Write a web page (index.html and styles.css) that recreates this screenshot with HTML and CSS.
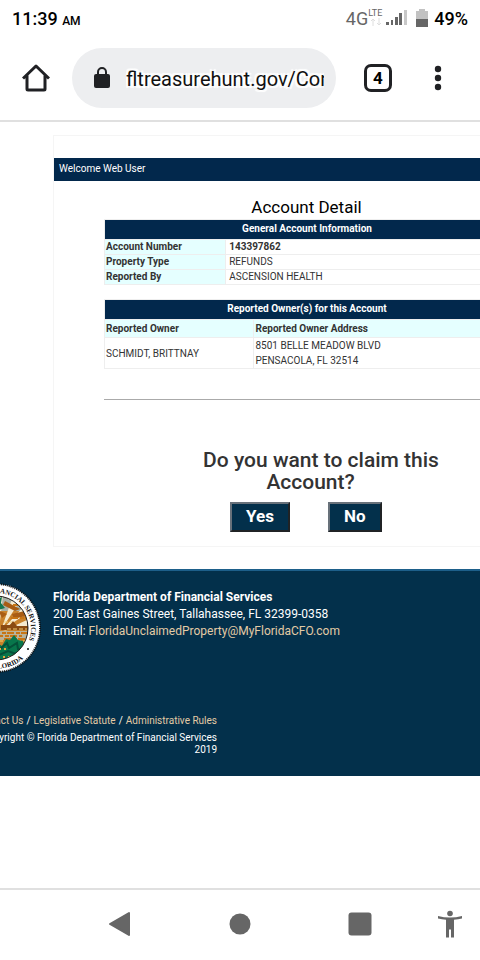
FILE: index.html
```html
<!DOCTYPE html>
<html lang="en">
<head>
<meta charset="utf-8">
<meta name="viewport" content="width=device-width, initial-scale=1">
<title>Account Detail</title>
<link rel="stylesheet" href="styles.css">
</head>
<body>
<header class="browser">
  <div class="status">
    <div class="clock">11:39 <small>AM</small></div>
    <div class="signals">
      <span class="network">4G</span>
      <span class="lte">LTE
        <svg width="12" height="8" viewBox="0 0 12 8" fill="none" stroke="#dedede" aria-hidden="true"><path d="M3 8V1M1 3l2-2 2 2M9 0v7M7 5l2 2 2-2"/></svg>
      </span>
      <svg class="bars" width="21" height="16" viewBox="0 0 21 16" aria-hidden="true"><g fill="#666"><rect y="12" width="3" height="3"/><rect x="5" y="10" width="2" height="5"/><rect x="9" y="7" width="3" height="8"/><rect x="13" y="3" width="3" height="12"/></g><rect x="18" width="3" height="15" fill="#c8c8c8"/></svg>
      <svg class="battery" width="12" height="19" viewBox="0 0 12 19" aria-hidden="true"><path d="M0 2h3V0h6v2h3v9H0z" fill="#c2c2c2"/><path d="M0 10h12v8H0z" fill="#666"/></svg>
      <span class="percent">49%</span>
    </div>
  </div>
  <div class="toolbar">
    <button class="icon home" aria-label="Home"><svg width="28" height="28" viewBox="0 0 28 28" fill="none" stroke="#202124" stroke-width="3" stroke-linejoin="round"><path d="M1 14.500 14 2l13 12.500M5 11.500V25q0 1 1 1h16q1 0 1-1V11.500"/></svg></button>
    <div class="address">
      <svg width="16" height="22" viewBox="0 0 16 22" aria-hidden="true"><path d="M4 8V5a4 4 0 0 1 8 0v3" fill="none" stroke="#202124" stroke-width="2"/><rect y="7" width="16" height="14" rx="2" fill="#202124"/></svg>
      <input type="text" aria-label="Web address" value="fltreasurehunt.gov/Con">
    </div>
    <button class="tabs" aria-label="4 open tabs">4</button>
    <button class="icon more" aria-label="More options"><svg width="8" height="26" viewBox="0 0 8 26" fill="#202124"><circle cx="4" cy="4" r="3.200"/><circle cx="4" cy="13" r="3.200"/><circle cx="4" cy="22" r="3.200"/></svg></button>
  </div>
</header>

<main class="page">
  <section class="panel">
    <div class="welcome">Welcome Web User</div>
    <div class="detail">
      <h1>Account Detail</h1>
      <table class="general">
        <colgroup><col class="label"><col></colgroup>
        <thead><tr><th colspan="2">General Account Information</th></tr></thead>
        <tbody>
          <tr><th scope="row">Account Number</th><td><b>143397862</b></td></tr>
          <tr><th scope="row">Property Type</th><td>REFUNDS</td></tr>
          <tr><th scope="row">Reported By</th><td>ASCENSION HEALTH</td></tr>
        </tbody>
      </table>
      <table class="owners">
        <colgroup><col class="owner"><col></colgroup>
        <thead>
          <tr><th colspan="2">Reported Owner(s) for this Account</th></tr>
          <tr class="columns"><th scope="col">Reported Owner</th><th scope="col">Reported Owner Address</th></tr>
        </thead>
        <tbody><tr><td>SCHMIDT, BRITTNAY</td><td>8501 BELLE MEADOW BLVD<br>PENSACOLA, FL 32514</td></tr></tbody>
      </table>
      <hr>
    </div>
    <div class="claim">
      <h2>Do you want to claim this Account?&nbsp;&nbsp;&nbsp;&nbsp;</h2>
      <div class="choices"><button>Yes</button><button>No</button></div>
    </div>
  </section>

  <footer class="footer">
    <div class="agency">
      <svg class="seal" width="90" height="90" viewBox="0 0 90 90" role="img" aria-label="Department of Financial Services seal">
        <defs>
          <path id="ring" d="M45 80A35 35 0 1 1 45.100 80"/>
          <path id="ring-low" d="M4 45A41 41 0 0 0 86 45"/>
          <clipPath id="scene"><circle cx="45" cy="45" r="32"/></clipPath>
        </defs>
        <circle cx="45" cy="45" r="44" fill="#fff" stroke="#111" stroke-width="2" stroke-dasharray="1 1"/>
        <g clip-path="url(#scene)">
          <path d="M10 10h70v70H10z" fill="#c9822b"/>
          <path d="M10 10h70v18H10z" fill="#a7afa5"/>
          <path d="M48 47 44 12l8 0zM50 47l12-34 7 5zM51 47l24-26 3 8zM52 48l28-13v7z" fill="#f5ead0"/>
          <path d="M54 18l15 8-5 2-12-6zM61 31l17-4v5l-15 4zM47 27l9 4-5 4z" fill="#a85c14"/>
          <path d="M50 42h9l3-4 4 5h12v4H50z" fill="#8b4b12"/>
          <path d="M40 48h40v9H40z" fill="#b9b39a"/>
          <path d="M42 50h36M45 53h26M53 56h26M62 22h12M60 35h18" stroke="#c87514" stroke-width="2" stroke-dasharray="7 2 4 1"/>
          <path d="M53 39h8M56 46h20M48 58h27" stroke="#f2cf70" stroke-dasharray="4 2"/>
          <path d="M38 62l8-2 5 3 4-7 4 1 4-5 4 5 5 1 2 6 6 1v17H38z" fill="#08764b"/>
          <path d="M49 66l7-6 2 5 8-5 1 6 8 1M48 72l9-4 8 3 10-2" fill="none" stroke="#045038" stroke-width="2"/>
          <path d="M43 66h13M52 74h17" stroke="#e1a840" stroke-width="2" stroke-dasharray="2 3"/>
          <path d="M45 16l6-2-1 6 4 5-7 2z" fill="#14764f"/>
        </g>
        <circle cx="45" cy="45" r="32" fill="none" stroke="#222"/>
        <text class="seal-text"><textPath href="#ring" startOffset="177">DEPARTMENT OF FINANCIAL SERVICES</textPath></text>
        <text class="seal-text"><textPath href="#ring-low" startOffset="94">OF FLORIDA</textPath></text>
        <circle cx="77" cy="66" r="1" fill="#111"/>
      </svg>
      <address>
        <strong>Florida Department of Financial Services</strong><br>
        200 East Gaines Street, Tallahassee, FL 32399-0358<br>
        Email: <a href="mailto:FloridaUnclaimedProperty@MyFloridaCFO.com">FloridaUnclaimedProperty@MyFloridaCFO.com</a>
      </address>
    </div>
    <div class="legal">
      <nav><a href="#">Contact Us</a> / <a href="#">Legislative Statute</a> / <a href="#">Administrative Rules</a></nav>
      <p>Copyright © Florida Department of Financial Services 2019</p>
    </div>
  </footer>
</main>

<nav class="system" aria-label="System navigation">
  <span></span>
  <button class="icon" aria-label="Back"><svg width="24" height="26" viewBox="0 0 24 26"><path d="M2 13 21 2v22z" fill="#666" stroke="#666" stroke-width="2" stroke-linejoin="round"/></svg></button>
  <button class="icon" aria-label="Home screen"><svg width="22" height="22" viewBox="0 0 22 22"><circle cx="11" cy="11" r="10.500" fill="#666"/></svg></button>
  <button class="icon" aria-label="Recent apps"><svg width="24" height="24" viewBox="0 0 24 24"><rect x=".5" y=".5" width="23" height="23" rx="3" fill="#666"/></svg></button>
  <button class="icon" aria-label="Accessibility"><svg width="24" height="28" viewBox="0 0 24 28" fill="#666"><circle cx="12" cy="3.500" r="2.800"/><path d="M0 6q12 3 24 0v2.500q-4 1-8 1.300V27.500h-3v-8h-2v8H8V9.800Q4 9.500 0 8.500z"/></svg></button>
</nav>
</body>
</html>
```
FILE: styles.css
```css
* { box-sizing: border-box; }
body {
  margin: 0;
  min-height: 100vh;
  display: flex;
  flex-direction: column;
  overflow-x: hidden;
  background: #fff;
  color: #333;
  font-family: Roboto, "Liberation Sans", sans-serif;
}
button { font-family: inherit; }
.icon { display: grid; place-items: center; padding: 0; border: 0; background: none; }
svg { display: block; flex: none; }

.browser { border-bottom: 2px solid #e0e0e0; }
.status {
  height: 36px;
  padding: 0 12px;
  display: flex;
  align-items: center;
  justify-content: space-between;
  color: #000;
  font-size: 18px;
  font-weight: 500;
}
.clock small { font-size: 12px; }
.signals { display: flex; align-items: center; }
.network { color: #666; font-weight: 400; }
.lte { height: 20px; margin-right: 4px; color: #666; font-size: 9px; font-weight: 400; line-height: 10px; }
.lte svg { margin-left: 2px; }
.battery { margin: 0 6px 0 9px; }
.toolbar {
  height: 84px;
  padding: 0 38px 0 22px;
  display: flex;
  align-items: center;
}
.address {
  flex: 1;
  min-width: 0;
  height: 60px;
  margin: 0 28px 0 22px;
  padding: 0 12px 0 22px;
  display: flex;
  align-items: center;
  gap: 16px;
  border-radius: 30px;
  background: #edeef0;
}
.address input {
  flex: 1;
  min-width: 0;
  padding: 2px 0 0;
  border: 0;
  background: none;
  color: #111;
  font: 20px/30px Roboto, sans-serif;
  text-shadow: 0 0 3px #fff, 2px 2px 1px #fff, -2px -2px 1px #fff, 2px -2px 1px #fff, -2px 2px 1px #fff;
}
.tabs {
  width: 28px;
  height: 28px;
  padding: 0;
  border: 3px solid #202124;
  border-radius: 7px;
  background: #fff;
  color: #000;
  font-size: 17px;
  font-weight: 700;
  line-height: 20px;
}
.more { margin-left: 42px; }

.page { flex: 1; padding-top: 13px; overflow: hidden; }
.panel {
  margin: 0 -80px 0 53px;
  padding: 22px 0 14px;
  border: 1px solid #f5f5f5;
}
.welcome {
  padding: 0 5px;
  background: #02284c;
  color: #fff;
  font-size: 10px;
  line-height: 22px;
  padding-bottom: 1px;
}
.detail { margin: 0 50px; }
h1 {
  margin: 16px 0 2px;
  color: #000;
  font-size: 17px;
  font-weight: 400;
  line-height: 20px;
  text-align: center;
}
table {
  width: 100%;
  border-collapse: collapse;
  table-layout: fixed;
  font-size: 10px;
  line-height: 14px;
}
.label { width: 30%; }
.owner { width: 37%; }
th, td { padding: 0 0 0 1px; border: 1px solid #eee; text-align: left; }
thead th { height: 20px; padding-bottom: 2px; background: #02284c; color: #fff; text-align: center; }
tbody th, .columns th { background: #e5ffff; color: #333; text-align: left; }
.columns th { height: 18px; padding-bottom: 0; }
.general td { padding-left: 3px; }
.owners { margin-top: 14px; }
.owners td { line-height: 15px; }
.owners tbody td { padding-bottom: 0; }
hr { margin: 30px 0 0; border: 0; border-top: 1px solid #aaa; }
.claim { width: 250px; margin: 49px 0 0 142px; }
h2 {
  margin: 0 0 9px;
  font-size: 21px;
  font-weight: 500;
  line-height: 22px;
  text-align: center;
}
.choices { display: flex; gap: 38px; margin-left: 34px; }
.choices button {
  height: 30px;
  padding: 0 14px 2px;
  border: 2px outset #68717a;
  border-radius: 0;
  background: #03304b;
  color: #fff;
  font-size: 17px;
  font-weight: 700;
}

.footer {
  margin-top: 22px;
  padding-bottom: 20px;
  border-top: 2px solid #1d5f8a;
  background: #03304b;
  color: #fff;
}
.footer a { color: #e3cba5; text-decoration: none; }
.agency { display: flex; gap: 12px; padding-top: 12px; margin-left: -49px; }
.seal-text { font: 700 7px "Liberation Serif", serif; fill: #111; text-anchor: end; }
address {
  padding-top: 6px;
  font-size: 12px;
  font-style: normal;
  line-height: 17px;
  white-space: nowrap;
}
.legal {
  width: 250px;
  margin: 42px 0 0 -33px;
  font-size: 10px;
  text-align: right;
}
.legal nav {
  display: flex;
  justify-content: flex-end;
  gap: 3px;
  line-height: 12px;
  white-space: nowrap;
}
.legal p { margin: 5px 0 0; line-height: 12px; }

.system {
  height: 72px;
  padding-bottom: 2px;
  display: grid;
  grid-template-columns: 1fr 2fr 2fr 2fr 1fr;
  align-items: center;
  border-top: 2px solid #e0e0e0;
}
.system .icon { justify-self: center; }
```
